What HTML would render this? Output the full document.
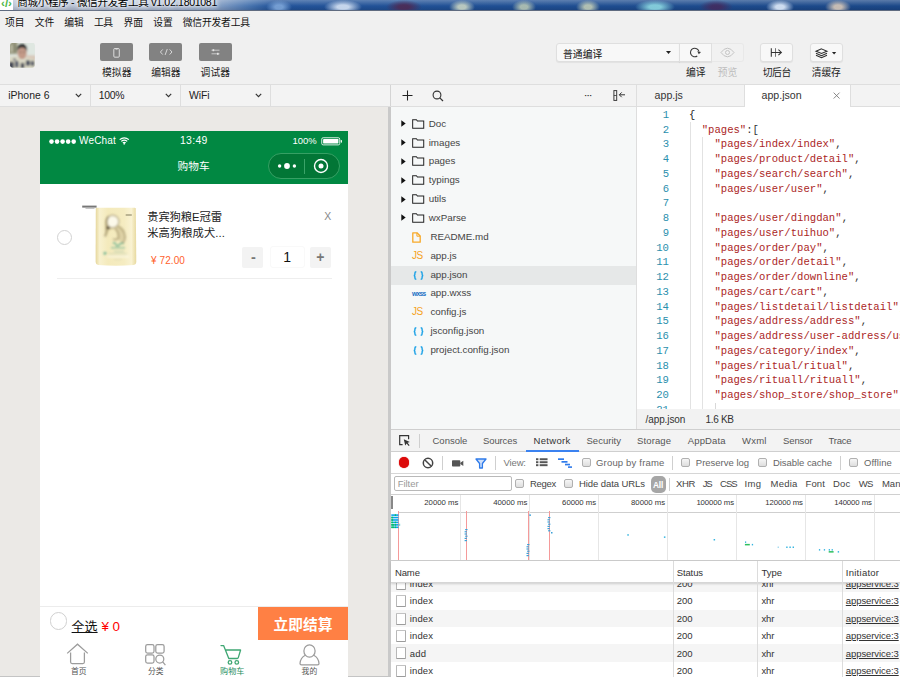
<!DOCTYPE html>
<html lang="zh"><head><meta charset="utf-8"><title>商城小程序 - 微信开发者工具</title>
<style>
html,body{margin:0;padding:0}
body{width:900px;height:677px;overflow:hidden;position:relative;background:#f0f0f0;font-family:"Liberation Sans","Noto Sans CJK SC",sans-serif;}
.a{position:absolute;display:block}
.t{position:absolute;white-space:pre}
svg{overflow:visible}
</style></head><body>
<div class="a" style="left:0px;top:0px;width:900px;height:11px;background:radial-gradient(ellipse 13px 7px at 279px 7px,rgba(130,170,220,.85) 30%,rgba(0,0,0,0) 100%),radial-gradient(ellipse 19px 7px at 343px 7px,rgba(205,220,240,.95) 30%,rgba(0,0,0,0) 100%),radial-gradient(ellipse 18px 7px at 404px 7px,rgba(80,40,80,.85) 30%,rgba(0,0,0,0) 100%),radial-gradient(ellipse 13px 7px at 462px 7px,rgba(200,212,196,.9) 30%,rgba(0,0,0,0) 100%),radial-gradient(ellipse 12px 7px at 524px 7px,rgba(190,204,182,.85) 30%,rgba(0,0,0,0) 100%),radial-gradient(ellipse 12px 7px at 588px 7px,rgba(200,210,185,.85) 30%,rgba(0,0,0,0) 100%),radial-gradient(ellipse 20px 7px at 655px 7px,rgba(140,215,225,.9) 30%,rgba(0,0,0,0) 100%),radial-gradient(ellipse 17px 7px at 716px 7px,rgba(70,40,90,.8) 30%,rgba(0,0,0,0) 100%),radial-gradient(ellipse 14px 7px at 780px 7px,rgba(215,228,245,.95) 30%,rgba(0,0,0,0) 100%),radial-gradient(ellipse 13px 7px at 838px 7px,rgba(215,200,185,.9) 30%,rgba(0,0,0,0) 100%),linear-gradient(180deg,rgba(255,255,255,.28) 0,rgba(255,255,255,0) 55%,rgba(0,0,20,.16) 100%),linear-gradient(90deg,#b9c3d4 0,#b3bed1 60px,#a9b7ce 150px,#8fa6c8 212px,#4a76b0 248px,#23549a 272px,#1f4f93 500px,#1b4888 900px);"></div>
<div class="a" style="left:0px;top:10px;width:900px;height:1px;background:#5f6b80;"></div>
<div class="a" style="left:0px;top:0px;width:13px;height:9.5px;background:#fff;"></div>
<div class="t" style="left:1px;top:-5px;font-size:11.65px;line-height:16px;color:#4db848;font-weight:700;">‹/›</div>
<div class="t" style="left:17.3px;top:-7.4px;font-size:10.56px;line-height:18px;color:#000;letter-spacing:-0.31px;text-shadow:0 0 3px #fff,0 0 5px #fff,0 0 6px #fff;">商城小程序 - 微信开发者工具 v1.02.1801081</div>
<div class="t" style="left:4.9px;top:15.3px;font-size:9.8px;line-height:16px;color:#111;letter-spacing:0.05px;">项目</div>
<div class="t" style="left:34.7px;top:15.3px;font-size:9.8px;line-height:16px;color:#111;">文件</div>
<div class="t" style="left:64.2px;top:15.3px;font-size:9.8px;line-height:16px;color:#111;">编辑</div>
<div class="t" style="left:93.9px;top:15.3px;font-size:9.8px;line-height:16px;color:#111;letter-spacing:-0.4px;">工具</div>
<div class="t" style="left:123.4px;top:15.3px;font-size:9.8px;line-height:16px;color:#111;">界面</div>
<div class="t" style="left:153.2px;top:15.3px;font-size:9.8px;line-height:16px;color:#111;">设置</div>
<div class="t" style="left:182.7px;top:15.3px;font-size:9.8px;line-height:16px;color:#111;letter-spacing:-0.19px;">微信开发者工具</div>
<svg class="a" style="left:10px;top:43.200px" width="24.800" height="24.800" viewBox="0 0 25 25"><defs><clipPath id="av"><rect width="25" height="25" rx="2.500"/></clipPath><filter id="bl" x="-20%" y="-20%" width="140%" height="140%"><feGaussianBlur stdDeviation="0.850"/></filter></defs>
<g clip-path="url(#av)"><rect width="25" height="25" fill="#dde3dc"/><g filter="url(#bl)"><rect x="-2" y="-2" width="9.500" height="13" fill="#99997f"/><rect x="0.500" y="2" width="2" height="7" fill="#bdbda8"/><rect x="4" y="1" width="1.600" height="8" fill="#7d7d68"/><rect x="16" y="-2" width="11" height="15" fill="#dfe7e1"/>
<rect x="16.500" y="12.500" width="10" height="4.500" fill="#d8c6b8"/>
<path d="M-1 27V15Q4 12 8 14L12.500 18 16 15Q21 14.500 26 17.500V27Z" fill="#dcd9c5"/>
<ellipse cx="12.300" cy="10" rx="4.600" ry="6.400" fill="#c39a88"/><path d="M7 8.500Q6.500 1 12.500 1Q18 1.200 17.300 8.500Q15.500 4.300 11.500 4.600Q8.500 5 7 8.500Z" fill="#272a2b"/>
<ellipse cx="10.500" cy="9" rx="1" ry="0.500" fill="#5a4540"/><ellipse cx="14.200" cy="9" rx="1" ry="0.500" fill="#5a4540"/>
<rect x="-1" y="19" width="5" height="7" rx="1.500" fill="#474b58"/><rect x="5" y="18" width="3.500" height="7" rx="1.500" fill="#50566a"/><rect x="10.800" y="20" width="3.600" height="6" rx="1.500" fill="#434754"/><rect x="16" y="17.200" width="4.200" height="6" rx="1.800" fill="#4c5162"/><rect x="21" y="18" width="3.500" height="5.500" rx="1.500" fill="#555a68"/><rect x="3" y="15.500" width="3" height="2.500" rx="1" fill="#7d8088"/></g></g></svg>
<div class="a" style="left:100px;top:43.3px;width:33px;height:18.1px;background:#828282;border-radius:2px;"><svg class="a" style="left:13px;top:4.600px" width="7.100" height="9.700" viewBox="0 0 8 11"><rect x="0.9" y="0.6" width="6.2" height="9.8" rx="1" fill="none" stroke="#f0f0f0" stroke-width="0.950"/><rect x="2.8" y="1.700" width="2.400" height="0.600" fill="#eee"/></svg></div>
<div class="a" style="left:149.2px;top:43.3px;width:32.8px;height:18.1px;background:#828282;border-radius:2px;"><svg class="a" style="left:9.700px;top:5px" width="14.400" height="8" viewBox="0 0 15 9"><path d="M3.6 1.6L1 4.5l2.6 2.9M11.4 1.6L14 4.5l-2.6 2.9M8.7 1.2L6.3 7.8" fill="none" stroke="#ececec" stroke-width="0.900"/></svg></div>
<div class="a" style="left:199px;top:43.3px;width:32.7px;height:18.1px;background:#828282;border-radius:2px;"><svg class="a" style="left:11px;top:4px" width="11" height="10" viewBox="0 0 11 10"><path d="M1.500 3.200h8M1.500 6.800h8" stroke="#dcdcdc" stroke-width="0.800"/><rect x="2.600" y="2.200" width="1.600" height="2" fill="#e4e4e4"/><rect x="7" y="5.800" width="1.600" height="2" fill="#e4e4e4"/></svg></div>
<div class="t" style="left:102px;top:64.7px;font-size:9.8px;line-height:16px;color:#222;letter-spacing:0.07px;">模拟器</div>
<div class="t" style="left:151.3px;top:64.7px;font-size:9.8px;line-height:16px;color:#222;letter-spacing:-0.03px;">编辑器</div>
<div class="t" style="left:200.6px;top:64.7px;font-size:9.8px;line-height:16px;color:#222;letter-spacing:0.07px;">调试器</div>
<div class="a" style="left:555.6px;top:43px;width:124.2px;height:19px;background:#f8f8f8;box-sizing:border-box;border:1px solid #dfdfdf;border-radius:3px 0 0 3px;box-shadow:0 1px 1px rgba(0,0,0,.06);"></div>
<div class="t" style="left:563px;top:47px;font-size:9.8px;line-height:16px;color:#111;letter-spacing:0.05px;">普通编译</div>
<svg class="a" style="left:665.700px;top:51.400px" width="5" height="3" viewBox="0 0 5 3"><path d="M0 0h5L2.5 3z" fill="#222"/></svg>
<div class="a" style="left:678.8px;top:43px;width:33.2px;height:19px;background:#f8f8f8;box-sizing:border-box;border:1px solid #dfdfdf;box-shadow:0 1px 1px rgba(0,0,0,.06);"></div>
<svg class="a" style="left:689px;top:47px" width="13" height="12" viewBox="0 0 13 12"><path d="M8.270 9.020A4.300 4.300 0 1 1 9.950 4.390" fill="none" stroke="#3a3a3a" stroke-width="1.050"/><path d="M8.200 4.200L12 5.100 9.800 7.300z" fill="#3a3a3a"/></svg>
<div class="a" style="left:711.5px;top:43px;width:32px;height:19px;background:#f1f1f1;box-sizing:border-box;border:1px solid #e8e8e8;border-left:none;border-radius:0 3px 3px 0;"></div>
<svg class="a" style="left:720px;top:47px" width="15" height="11" viewBox="0 0 15 11"><path d="M1 5.5Q4 1.2 7.5 1.2T14 5.5Q11 9.8 7.5 9.8T1 5.5z" fill="none" stroke="#c4c4c4" stroke-width="1"/><circle cx="7.5" cy="5.5" r="2" fill="none" stroke="#c4c4c4" stroke-width="1"/></svg>
<div class="a" style="left:760.4px;top:43px;width:32.6px;height:19px;background:#f8f8f8;box-sizing:border-box;border:1px solid #dfdfdf;border-radius:3px;box-shadow:0 1px 1px rgba(0,0,0,.06);"></div>
<svg class="a" style="left:770px;top:47px" width="13" height="11" viewBox="0 0 13 11"><path d="M1.300 1.200v8.600M1.300 5.400h10M8.400 2.700l3 2.700-3 2.700" fill="none" stroke="#333" stroke-width="1.050"/><path d="M5.500 1.200v8.600" fill="none" stroke="#333" stroke-opacity=".75" stroke-width="0.900"/></svg>
<div class="a" style="left:810px;top:43px;width:32.5px;height:19px;background:#f8f8f8;box-sizing:border-box;border:1px solid #dfdfdf;border-radius:3px;box-shadow:0 1px 1px rgba(0,0,0,.06);"></div>
<svg class="a" style="left:815.300px;top:47.600px" width="13" height="10.600" viewBox="0 0 13 12" preserveAspectRatio="none"><path d="M6.500 1L12 3.600 6.500 6.200 1 3.600z" fill="none" stroke="#2e2e2e" stroke-width="1.150"/><path d="M1 6L6.500 8.600 12 6M1 8.300L6.500 10.900 12 8.300" fill="none" stroke="#2e2e2e" stroke-width="1.150"/></svg>
<svg class="a" style="left:832.400px;top:51.600px" width="4.200" height="2.600" viewBox="0 0 5 3"><path d="M0 0h5L2.5 3z" fill="#222"/></svg>
<div class="t" style="left:686px;top:64.6px;font-size:9.8px;line-height:16px;color:#222;">编译</div>
<div class="t" style="left:717.8px;top:64.6px;font-size:9.8px;line-height:16px;color:#bdbdbd;letter-spacing:-0.2px;">预览</div>
<div class="t" style="left:762.7px;top:64.6px;font-size:9.8px;line-height:16px;color:#222;letter-spacing:-0.37px;">切后台</div>
<div class="t" style="left:811.8px;top:64.6px;font-size:9.8px;line-height:16px;color:#222;letter-spacing:-0.17px;">清缓存</div>
<div class="a" style="left:0px;top:85px;width:900px;height:21px;background:#f3f3f3;"></div>
<div class="a" style="left:0px;top:84px;width:900px;height:1px;background:#dedede;"></div>
<div class="a" style="left:0px;top:106px;width:900px;height:1px;background:#dedede;"></div>
<div class="t" style="left:8.3px;top:88px;font-size:10.43px;line-height:16px;color:#222;">iPhone 6</div>
<svg class="a" style="left:74.5px;top:93px" width="7" height="5" viewBox="0 0 7 5"><path d="M0.8 0.9L3.5 3.6 6.2 0.9" fill="none" stroke="#333" stroke-width="1.2"/></svg>
<div class="a" style="left:89.5px;top:85px;width:1px;height:21px;background:#dedede;"></div>
<div class="t" style="left:98.8px;top:88px;font-size:10.43px;line-height:16px;color:#222;letter-spacing:-0.32px;">100%</div>
<svg class="a" style="left:165px;top:93px" width="7" height="5" viewBox="0 0 7 5"><path d="M0.8 0.9L3.5 3.6 6.2 0.9" fill="none" stroke="#333" stroke-width="1.2"/></svg>
<div class="a" style="left:180px;top:85px;width:1px;height:21px;background:#dedede;"></div>
<div class="t" style="left:189px;top:88px;font-size:10.43px;line-height:16px;color:#222;letter-spacing:-0.12px;">WiFi</div>
<svg class="a" style="left:255px;top:93px" width="7" height="5" viewBox="0 0 7 5"><path d="M0.8 0.9L3.5 3.6 6.2 0.9" fill="none" stroke="#333" stroke-width="1.2"/></svg>
<div class="a" style="left:270px;top:85px;width:1px;height:21px;background:#dedede;"></div>
<div class="a" style="left:390px;top:85px;width:1px;height:21px;background:#d4d4d4;"></div>
<svg class="a" style="left:402px;top:90px" width="11" height="11" viewBox="0 0 11 11"><path d="M5.5 0.500v10M0.5 5.500h10" stroke="#222" stroke-width="1.05"/></svg>
<svg class="a" style="left:432px;top:90px" width="12" height="12" viewBox="0 0 12 12"><circle cx="5" cy="5" r="3.9" fill="none" stroke="#333" stroke-width="1.1"/><path d="M7.800 7.800L11 11" stroke="#333" stroke-width="1.2"/></svg>
<div class="t" style="left:584.4px;top:88.5px;font-size:7.92px;line-height:14px;color:#222;font-weight:700;letter-spacing:-0.11px;">···</div>
<svg class="a" style="left:612.5px;top:90px" width="13" height="11" viewBox="0 0 13 11"><rect x="0.9" y="0.600" width="2.800" height="9.800" fill="none" stroke="#333" stroke-width="0.95"/><path d="M0.900 5.500h2.800" stroke="#333" stroke-width="0.8"/><path d="M12 4.800H6.500M8.700 2.400L6.300 4.800 8.700 7.200" fill="none" stroke="#333" stroke-width="1"/></svg>
<div class="a" style="left:636px;top:85px;width:1px;height:345px;background:#dedede;"></div>
<div class="t" style="left:654.6px;top:87.3px;font-size:10.61px;line-height:16px;color:#333;">app.js</div>
<div class="a" style="left:744px;top:85px;width:106.5px;height:22px;background:#fff;box-sizing:border-box;border-left:1px solid #dedede;border-right:1px solid #dedede;"></div>
<div class="t" style="left:761.5px;top:87.3px;font-size:10.61px;line-height:16px;color:#333;">app.json</div>
<svg class="a" style="left:832.800px;top:92px" width="7.200" height="7.200" viewBox="0 0 8 8"><path d="M0.700 0.700l6.600 6.600M7.300 0.700L0.700 7.300" stroke="#777" stroke-width="0.95"/></svg>
<div class="a" style="left:0px;top:107px;width:388.5px;height:570px;background:#ebe9e6;"></div>
<div class="a" style="left:388.3px;top:107px;width:2.7px;height:570px;background:#c9c9c9;"></div>
<div class="a" style="left:0px;top:676px;width:391px;height:1px;background:#c4c4c4;"></div>
<div class="a" style="left:40px;top:131px;width:308px;height:546px;background:#fff;"></div>
<div class="a" style="left:40px;top:131px;width:308px;height:52.6px;background:#018842;"></div>
<svg class="a" style="left:48.600px;top:138.500px" width="28" height="6" viewBox="0 0 28 6"><circle cx="2.5" cy="2.6" r="2.3" fill="#fff"/><circle cx="8.05" cy="2.6" r="2.3" fill="#fff"/><circle cx="13.6" cy="2.6" r="2.3" fill="#fff"/><circle cx="19.15" cy="2.6" r="2.3" fill="#fff"/><circle cx="24.7" cy="2.6" r="2.3" fill="#fff"/></svg>
<div class="t" style="left:79px;top:133px;font-size:10px;line-height:16px;color:#fff;letter-spacing:0.18px;">WeChat</div>
<svg class="a" style="left:119px;top:137px" width="10.500" height="7.600" viewBox="0 0 11 9" preserveAspectRatio="none"><path d="M0.700 3.200Q5.500 -1.200 10.300 3.200M2.400 5.200Q5.500 2.400 8.600 5.200M4 7Q5.500 5.700 7 7" fill="none" stroke="#fff" stroke-width="1.350"/><circle cx="5.500" cy="8" r="1" fill="#fff"/></svg>
<div class="t" style="left:180px;top:132.7px;font-size:10.43px;line-height:16px;color:#fff;letter-spacing:0.3px;">13:49</div>
<div class="t" style="left:292.4px;top:134.3px;font-size:9.46px;line-height:14px;color:#fff;">100%</div>
<svg class="a" style="left:320.600px;top:137.200px" width="22" height="9.400" viewBox="0 0 23 10" preserveAspectRatio="none"><rect x="0.800" y="0.800" width="18.800" height="7.600" rx="1.500" fill="none" stroke="#fff" stroke-width="0.9"/><rect x="2.200" y="2.200" width="16" height="4.800" rx="0.500" fill="#fff"/><rect x="20.600" y="3.200" width="1.300" height="2.800" rx="0.600" fill="#fff"/></svg>
<div class="t" style="left:177.6px;top:158px;font-size:10.67px;line-height:16px;color:#fff;">购物车</div>
<div class="a" style="left:268.4px;top:153.4px;width:71.6px;height:25.2px;background:#027636;box-sizing:border-box;border:1px solid #36a064;border-radius:13px;"></div>
<div class="a" style="left:304.2px;top:158.5px;width:0.8px;height:15px;background:#3aa368;"></div>
<svg class="a" style="left:276px;top:161px" width="22" height="10" viewBox="0 0 22 10"><circle cx="3.600" cy="5" r="1.700" fill="#fff"/><circle cx="11" cy="5" r="2.900" fill="#fff"/><circle cx="18.400" cy="5" r="1.700" fill="#fff"/></svg>
<svg class="a" style="left:313.400px;top:158px" width="16" height="16" viewBox="0 0 16 16"><circle cx="8" cy="8" r="6.500" fill="none" stroke="#fff" stroke-width="1.400"/><circle cx="8" cy="8" r="2.500" fill="#fff"/></svg>
<div class="a" style="left:57.2px;top:230px;width:15px;height:15px;background:#fff;box-sizing:border-box;border:1px solid #d2d2d2;border-radius:50%;"></div>
<svg class="a" style="left:81px;top:205px" width="62" height="61" viewBox="0 0 62 61"><defs><linearGradient id="bag" x1="0" x2="1"><stop offset="0" stop-color="#e6d79c"/><stop offset="0.100" stop-color="#f8f1cf"/><stop offset="0.300" stop-color="#f4eabc"/><stop offset="0.700" stop-color="#f5ecc1"/><stop offset="0.880" stop-color="#f9f2d2"/><stop offset="1" stop-color="#e7d99f"/></linearGradient><filter id="b2" x="-20%" y="-20%" width="140%" height="140%"><feGaussianBlur stdDeviation="0.800"/></filter></defs>
<path d="M14.800 3.400Q15 2.800 16 2.800H53.600Q54.600 2.800 54.800 3.400L55.300 57Q55.300 59.600 52.800 60Q35 61.300 17.200 60Q14.600 59.600 14.600 57Z" fill="url(#bag)"/>
<g filter="url(#b2)"><circle cx="31.500" cy="16.500" r="6.300" fill="#fcf9ea" stroke="#8f7f56" stroke-opacity=".55" stroke-width="1.500"/>
<path d="M27.500 11.500Q24.500 16 25.800 22Q26.500 27 24 31.500" fill="none" stroke="#7a6a44" stroke-opacity=".6" stroke-width="2"/>
<path d="M36.500 21Q43 24 44 31Q44.500 35 41.500 38.500M34 23.500Q38 27 37.500 33Q35 35.500 32 34" fill="none" stroke="#8a7a52" stroke-opacity=".5" stroke-width="1.800"/>
<path d="M26 12Q22.500 20 24.500 31L28.500 25Q31 24 34 23.500Q37 28 36.500 34L41 38Q45.500 33 43.500 26Q41 21 36.500 20.500Q33 24 28 22Z" fill="#b9a878" fill-opacity=".38"/><ellipse cx="27.300" cy="22.800" rx="1.700" ry="1.400" fill="#2b2418" fill-opacity=".9"/>
<path d="M32 38.500Q34 36.500 35 39.500T38.500 39.500T42.500 39" fill="none" stroke="#3f9d80" stroke-opacity=".8" stroke-width="1.200"/>
<rect x="30" y="42.200" width="14" height="1.200" fill="#3f9d80" fill-opacity=".6"/><rect x="33" y="46" width="10" height="0.900" fill="#8fb6a0" fill-opacity=".6"/><rect x="28" y="48.500" width="18" height="0.900" fill="#9fbea8" fill-opacity=".5"/>
<circle cx="24" cy="48.300" r="1.400" fill="#3f9d80" fill-opacity=".8"/><rect x="26" y="50.800" width="22" height="1.600" fill="#ffffff" fill-opacity=".55"/><rect x="33" y="54" width="8" height="0.800" fill="#d9d3ac" fill-opacity=".8"/></g>
<rect x="1.200" y="0.600" width="14.400" height="2" fill="#4a4a4a" fill-opacity=".75"/><rect x="4.500" y="3.300" width="9" height="0.700" fill="#9a9a9a" fill-opacity=".8"/><rect x="44.500" y="9.200" width="6.500" height="1.500" rx="0.700" fill="#8d8768" fill-opacity=".75"/></svg>
<div class="t" style="left:147.2px;top:208.2px;font-size:11.3px;line-height:18px;color:#222;letter-spacing:-0.08px;">贵宾狗粮E冠雷</div>
<div class="t" style="left:147.2px;top:223.8px;font-size:11.3px;line-height:18px;color:#222;letter-spacing:0.06px;">米高狗粮成犬...</div>
<div class="t" style="left:151px;top:253px;font-size:10px;line-height:16px;color:#ff5f2e;letter-spacing:0.09px;">¥ 72.00</div>
<div class="t" style="left:324.2px;top:209px;font-size:10.43px;line-height:16px;color:#888;letter-spacing:0.53px;">X</div>
<div class="a" style="left:242px;top:246.5px;width:21.4px;height:21.2px;background:#f3f3f3;border-radius:2px;"></div>
<div class="t" style="left:251px;top:247px;font-size:14.56px;line-height:20px;color:#777;font-weight:700;letter-spacing:0.13px;">-</div>
<div class="a" style="left:269.5px;top:246px;width:35.2px;height:22px;background:#fff;box-sizing:border-box;border:1px solid #f9f9f9;border-radius:3px;"></div>
<div class="t" style="left:283.3px;top:244.8px;font-size:14.08px;line-height:24px;color:#111;letter-spacing:-0.64px;">1</div>
<div class="a" style="left:309.6px;top:246.5px;width:21.4px;height:21.2px;background:#f3f3f3;border-radius:2px;"></div>
<div class="t" style="left:316.2px;top:248.4px;font-size:14px;line-height:18px;color:#777;font-weight:700;letter-spacing:0.21px;">+</div>
<div class="a" style="left:57px;top:278px;width:274.7px;height:1px;background:#eeeeee;"></div>
<div class="a" style="left:40px;top:605.5px;width:308px;height:1px;background:#ececec;"></div>
<div class="a" style="left:49.5px;top:612.3px;width:17.5px;height:17.5px;background:#fff;box-sizing:border-box;border:1px solid #d0d0d0;border-radius:50%;"></div>
<div class="t" style="left:71.6px;top:617.4px;font-size:12.99px;line-height:20px;color:#111;text-decoration:underline;text-underline-offset:1px;">全选</div>
<div class="t" style="left:101.4px;top:617.4px;font-size:13.38px;line-height:20px;color:#f00;">¥ 0</div>
<div class="a" style="left:258px;top:607px;width:90px;height:32.6px;background:#ff8044;"></div>
<div class="t" style="left:273.6px;top:614px;font-size:14.71px;line-height:22px;color:#fff;font-weight:700;">立即结算</div>
<svg class="a" style="left:66px;top:643px" width="23" height="22" viewBox="0 0 23 22"><path d="M1.200 10.400L11.500 1.200 21.800 10.400" fill="none" stroke="#9c9c9c" stroke-width="1.250"/><path d="M4.600 9.500V19Q4.600 20.500 6.100 20.500H16.900Q18.400 20.500 18.400 19V9.500" fill="none" stroke="#9c9c9c" stroke-width="1.250"/></svg>
<div class="t" style="left:71px;top:666px;font-size:7.8px;line-height:12px;color:#555;">首页</div>
<svg class="a" style="left:144.500px;top:644.300px" width="21" height="22" viewBox="0 0 21 22"><g fill="none" stroke="#9c9c9c" stroke-width="1.250"><rect x="0.700" y="0.700" width="8.300" height="8.300" rx="1.800"/><rect x="10.800" y="0.700" width="8.300" height="8.300" rx="1.800"/><rect x="0.700" y="10.800" width="8.300" height="8.300" rx="1.800"/><circle cx="14.800" cy="15" r="4"/><path d="M17.700 17.900L20.400 21.200"/></g></svg>
<div class="t" style="left:148px;top:666px;font-size:7.8px;line-height:12px;color:#555;">分类</div>
<svg class="a" style="left:220px;top:644px" width="22" height="21" viewBox="0 0 22 21"><g fill="none" stroke="#3fa773" stroke-width="1.300" stroke-linejoin="round" stroke-linecap="round"><path d="M1 1.600H3.600L8.800 14.500H17.300Q18 14.500 18.300 13.600L20.600 6H5.400"/><circle cx="10" cy="18.400" r="1.800"/><circle cx="16.800" cy="18.400" r="1.800"/></g></svg>
<div class="t" style="left:220px;top:666px;font-size:8.13px;line-height:12px;color:#1f8f5f;">购物车</div>
<svg class="a" style="left:299px;top:643.500px" width="21" height="22" viewBox="0 0 21 22"><g fill="none" stroke="#9c9c9c" stroke-width="1.250"><ellipse cx="10.500" cy="7" rx="5.600" ry="6.200"/><path d="M6.300 11.200Q1.500 13.500 1 19.500Q1 20.800 2.500 20.800H18.500Q20 20.800 20 19.500Q19.500 13.500 14.700 11.200"/></g></svg>
<div class="t" style="left:301.6px;top:666px;font-size:7.8px;line-height:12px;color:#555;letter-spacing:0.1px;">我的</div>
<div class="a" style="left:391px;top:107px;width:245px;height:322.5px;background:#f6f8f8;"></div>
<svg class="a" style="left:401px;top:120.2px" width="5" height="7" viewBox="0 0 5 7"><path d="M0.300 0.300L4.700 3.500 0.300 6.700z" fill="#111"/></svg>
<svg class="a" style="left:411.500px;top:118.7px" width="12.400" height="10" viewBox="0 0 13 10" preserveAspectRatio="none"><path d="M0.700 9.300V0.700H4.600L5.700 2H12.300V9.300z" fill="none" stroke="#222" stroke-width="1.050"/></svg>
<div class="t" style="left:428.7px;top:116.7px;font-size:9.8px;line-height:14px;color:#444;">Doc</div>
<svg class="a" style="left:401px;top:139.05px" width="5" height="7" viewBox="0 0 5 7"><path d="M0.300 0.300L4.700 3.500 0.300 6.700z" fill="#111"/></svg>
<svg class="a" style="left:411.500px;top:137.55px" width="12.400" height="10" viewBox="0 0 13 10" preserveAspectRatio="none"><path d="M0.700 9.300V0.700H4.600L5.700 2H12.300V9.300z" fill="none" stroke="#222" stroke-width="1.050"/></svg>
<div class="t" style="left:428.7px;top:135.6px;font-size:9.8px;line-height:14px;color:#444;">images</div>
<svg class="a" style="left:401px;top:157.9px" width="5" height="7" viewBox="0 0 5 7"><path d="M0.300 0.300L4.700 3.500 0.300 6.700z" fill="#111"/></svg>
<svg class="a" style="left:411.500px;top:156.4px" width="12.400" height="10" viewBox="0 0 13 10" preserveAspectRatio="none"><path d="M0.700 9.300V0.700H4.600L5.700 2H12.300V9.300z" fill="none" stroke="#222" stroke-width="1.050"/></svg>
<div class="t" style="left:428.7px;top:154.4px;font-size:9.8px;line-height:14px;color:#444;">pages</div>
<svg class="a" style="left:401px;top:176.75px" width="5" height="7" viewBox="0 0 5 7"><path d="M0.300 0.300L4.700 3.500 0.300 6.700z" fill="#111"/></svg>
<svg class="a" style="left:411.500px;top:175.25px" width="12.400" height="10" viewBox="0 0 13 10" preserveAspectRatio="none"><path d="M0.700 9.300V0.700H4.600L5.700 2H12.300V9.300z" fill="none" stroke="#222" stroke-width="1.050"/></svg>
<div class="t" style="left:428.7px;top:173.2px;font-size:9.8px;line-height:14px;color:#444;">typings</div>
<svg class="a" style="left:401px;top:195.6px" width="5" height="7" viewBox="0 0 5 7"><path d="M0.300 0.300L4.700 3.500 0.300 6.700z" fill="#111"/></svg>
<svg class="a" style="left:411.500px;top:194.1px" width="12.400" height="10" viewBox="0 0 13 10" preserveAspectRatio="none"><path d="M0.700 9.300V0.700H4.600L5.700 2H12.300V9.300z" fill="none" stroke="#222" stroke-width="1.050"/></svg>
<div class="t" style="left:428.7px;top:192.1px;font-size:9.8px;line-height:14px;color:#444;">utils</div>
<svg class="a" style="left:401px;top:214.45px" width="5" height="7" viewBox="0 0 5 7"><path d="M0.300 0.300L4.700 3.500 0.300 6.700z" fill="#111"/></svg>
<svg class="a" style="left:411.500px;top:212.95px" width="12.400" height="10" viewBox="0 0 13 10" preserveAspectRatio="none"><path d="M0.700 9.300V0.700H4.600L5.700 2H12.300V9.300z" fill="none" stroke="#222" stroke-width="1.050"/></svg>
<div class="t" style="left:428.7px;top:210.9px;font-size:9.8px;line-height:14px;color:#444;">wxParse</div>
<svg class="a" style="left:412px;top:231.6px" width="9" height="11" viewBox="0 0 9 11"><path d="M0.800 0.800H5L8.200 4V10.200H0.800z" fill="none" stroke="#f7a928" stroke-width="1.300" stroke-linejoin="round"/><path d="M4.900 0.800V4.200H8.200" fill="none" stroke="#f7a928" stroke-width="1"/></svg>
<div class="t" style="left:430.4px;top:229.8px;font-size:9.8px;line-height:14px;color:#444;">README.md</div>
<div class="t" style="left:412.1px;top:247.7px;font-size:10px;line-height:16px;color:#f5a21d;letter-spacing:-0.69px;">JS</div>
<div class="t" style="left:430.4px;top:248.7px;font-size:9.8px;line-height:14px;color:#444;">app.js</div>
<div class="a" style="left:391px;top:266.2px;width:245px;height:18.5px;background:#e6e8e8;"></div>
<svg class="a" style="left:412.500px;top:270.5px" width="11" height="9" viewBox="0 0 11 9"><path d="M3.300 0.700Q1.900 0.700 1.900 2V3.300Q1.900 4.500 0.700 4.500Q1.900 4.500 1.900 5.700V7Q1.900 8.300 3.300 8.300M7.700 0.700Q9.100 0.700 9.100 2V3.300Q9.100 4.500 10.300 4.500Q9.100 4.500 9.100 5.700V7Q9.100 8.300 7.700 8.300" fill="none" stroke="#1ba1e6" stroke-width="1.400"/></svg>
<div class="t" style="left:430.4px;top:267.5px;font-size:9.8px;line-height:14px;color:#444;">app.json</div>
<div class="t" style="left:412.1px;top:288.7px;font-size:6.6px;line-height:10px;color:#1a6fc4;font-weight:700;letter-spacing:-0.69px;">wxss</div>
<div class="t" style="left:430.4px;top:286.4px;font-size:9.8px;line-height:14px;color:#444;">app.wxss</div>
<div class="t" style="left:412.1px;top:304.2px;font-size:10px;line-height:16px;color:#f5a21d;letter-spacing:-0.69px;">JS</div>
<div class="t" style="left:430.4px;top:305.2px;font-size:9.8px;line-height:14px;color:#444;">config.js</div>
<svg class="a" style="left:412.500px;top:327.05px" width="11" height="9" viewBox="0 0 11 9"><path d="M3.300 0.700Q1.900 0.700 1.900 2V3.300Q1.900 4.500 0.700 4.500Q1.900 4.500 1.900 5.700V7Q1.900 8.300 3.300 8.300M7.700 0.700Q9.100 0.700 9.100 2V3.300Q9.100 4.500 10.300 4.500Q9.100 4.500 9.100 5.700V7Q9.100 8.300 7.700 8.300" fill="none" stroke="#1ba1e6" stroke-width="1.400"/></svg>
<div class="t" style="left:430.4px;top:324.1px;font-size:9.8px;line-height:14px;color:#444;">jsconfig.json</div>
<svg class="a" style="left:412.500px;top:345.9px" width="11" height="9" viewBox="0 0 11 9"><path d="M3.300 0.700Q1.900 0.700 1.900 2V3.300Q1.900 4.500 0.700 4.500Q1.900 4.500 1.900 5.700V7Q1.900 8.300 3.300 8.300M7.700 0.700Q9.100 0.700 9.100 2V3.300Q9.100 4.500 10.300 4.500Q9.100 4.500 9.100 5.700V7Q9.100 8.300 7.700 8.300" fill="none" stroke="#1ba1e6" stroke-width="1.400"/></svg>
<div class="t" style="left:430.4px;top:342.9px;font-size:9.8px;line-height:14px;color:#444;">project.config.json</div>
<div class="a" style="left:637px;top:107px;width:263px;height:302px;background:#fff;"></div>
<div class="t" style="left:662.64px;top:106.7px;font-size:10.6px;line-height:16px;color:#2b8fad;font-family:'Liberation Mono','Noto Sans CJK SC',monospace;">1</div>
<div class="t" style="left:689px;top:106.7px;font-size:10.6px;line-height:16px;color:#222;font-family:'Liberation Mono','Noto Sans CJK SC',monospace;">{</div>
<div class="t" style="left:662.64px;top:121.5px;font-size:10.6px;line-height:16px;color:#2b8fad;font-family:'Liberation Mono','Noto Sans CJK SC',monospace;">2</div>
<div class="t" style="left:701.72px;top:121.5px;font-size:10.6px;line-height:16px;color:#ab2626;font-family:'Liberation Mono','Noto Sans CJK SC',monospace;">"pages"</div>
<div class="t" style="left:746.24px;top:121.5px;font-size:10.6px;line-height:16px;color:#333;font-family:'Liberation Mono','Noto Sans CJK SC',monospace;">:[</div>
<div class="t" style="left:662.64px;top:136.2px;font-size:10.6px;line-height:16px;color:#2b8fad;font-family:'Liberation Mono','Noto Sans CJK SC',monospace;">3</div>
<div class="t" style="left:714.44px;top:136.2px;font-size:10.6px;line-height:16px;color:#ab2626;font-family:'Liberation Mono','Noto Sans CJK SC',monospace;">"pages/index/index"</div>
<div class="t" style="left:835.28px;top:136.2px;font-size:10.6px;line-height:16px;color:#333;font-family:'Liberation Mono','Noto Sans CJK SC',monospace;">,</div>
<div class="t" style="left:662.64px;top:151px;font-size:10.6px;line-height:16px;color:#2b8fad;font-family:'Liberation Mono','Noto Sans CJK SC',monospace;">4</div>
<div class="t" style="left:714.44px;top:151px;font-size:10.6px;line-height:16px;color:#ab2626;font-family:'Liberation Mono','Noto Sans CJK SC',monospace;">"pages/product/detail"</div>
<div class="t" style="left:854.36px;top:151px;font-size:10.6px;line-height:16px;color:#333;font-family:'Liberation Mono','Noto Sans CJK SC',monospace;">,</div>
<div class="t" style="left:662.64px;top:165.7px;font-size:10.6px;line-height:16px;color:#2b8fad;font-family:'Liberation Mono','Noto Sans CJK SC',monospace;">5</div>
<div class="t" style="left:714.44px;top:165.7px;font-size:10.6px;line-height:16px;color:#ab2626;font-family:'Liberation Mono','Noto Sans CJK SC',monospace;">"pages/search/search"</div>
<div class="t" style="left:848px;top:165.7px;font-size:10.6px;line-height:16px;color:#333;font-family:'Liberation Mono','Noto Sans CJK SC',monospace;">,</div>
<div class="t" style="left:662.64px;top:180.5px;font-size:10.6px;line-height:16px;color:#2b8fad;font-family:'Liberation Mono','Noto Sans CJK SC',monospace;">6</div>
<div class="t" style="left:714.44px;top:180.5px;font-size:10.6px;line-height:16px;color:#ab2626;font-family:'Liberation Mono','Noto Sans CJK SC',monospace;">"pages/user/user"</div>
<div class="t" style="left:822.56px;top:180.5px;font-size:10.6px;line-height:16px;color:#333;font-family:'Liberation Mono','Noto Sans CJK SC',monospace;">,</div>
<div class="t" style="left:662.64px;top:195.3px;font-size:10.6px;line-height:16px;color:#2b8fad;font-family:'Liberation Mono','Noto Sans CJK SC',monospace;">7</div>
<div class="t" style="left:662.64px;top:210px;font-size:10.6px;line-height:16px;color:#2b8fad;font-family:'Liberation Mono','Noto Sans CJK SC',monospace;">8</div>
<div class="t" style="left:714.44px;top:210px;font-size:10.6px;line-height:16px;color:#ab2626;font-family:'Liberation Mono','Noto Sans CJK SC',monospace;">"pages/user/dingdan"</div>
<div class="t" style="left:841.64px;top:210px;font-size:10.6px;line-height:16px;color:#333;font-family:'Liberation Mono','Noto Sans CJK SC',monospace;">,</div>
<div class="t" style="left:662.64px;top:224.8px;font-size:10.6px;line-height:16px;color:#2b8fad;font-family:'Liberation Mono','Noto Sans CJK SC',monospace;">9</div>
<div class="t" style="left:714.44px;top:224.8px;font-size:10.6px;line-height:16px;color:#ab2626;font-family:'Liberation Mono','Noto Sans CJK SC',monospace;">"pages/user/tuihuo"</div>
<div class="t" style="left:835.28px;top:224.8px;font-size:10.6px;line-height:16px;color:#333;font-family:'Liberation Mono','Noto Sans CJK SC',monospace;">,</div>
<div class="t" style="left:656.28px;top:239.5px;font-size:10.6px;line-height:16px;color:#2b8fad;font-family:'Liberation Mono','Noto Sans CJK SC',monospace;">10</div>
<div class="t" style="left:714.44px;top:239.5px;font-size:10.6px;line-height:16px;color:#ab2626;font-family:'Liberation Mono','Noto Sans CJK SC',monospace;">"pages/order/pay"</div>
<div class="t" style="left:822.56px;top:239.5px;font-size:10.6px;line-height:16px;color:#333;font-family:'Liberation Mono','Noto Sans CJK SC',monospace;">,</div>
<div class="t" style="left:656.28px;top:254.3px;font-size:10.6px;line-height:16px;color:#2b8fad;font-family:'Liberation Mono','Noto Sans CJK SC',monospace;">11</div>
<div class="t" style="left:714.44px;top:254.3px;font-size:10.6px;line-height:16px;color:#ab2626;font-family:'Liberation Mono','Noto Sans CJK SC',monospace;">"pages/order/detail"</div>
<div class="t" style="left:841.64px;top:254.3px;font-size:10.6px;line-height:16px;color:#333;font-family:'Liberation Mono','Noto Sans CJK SC',monospace;">,</div>
<div class="t" style="left:656.28px;top:269.1px;font-size:10.6px;line-height:16px;color:#2b8fad;font-family:'Liberation Mono','Noto Sans CJK SC',monospace;">12</div>
<div class="t" style="left:714.44px;top:269.1px;font-size:10.6px;line-height:16px;color:#ab2626;font-family:'Liberation Mono','Noto Sans CJK SC',monospace;">"pages/order/downline"</div>
<div class="t" style="left:854.36px;top:269.1px;font-size:10.6px;line-height:16px;color:#333;font-family:'Liberation Mono','Noto Sans CJK SC',monospace;">,</div>
<div class="t" style="left:656.28px;top:283.8px;font-size:10.6px;line-height:16px;color:#2b8fad;font-family:'Liberation Mono','Noto Sans CJK SC',monospace;">13</div>
<div class="t" style="left:714.44px;top:283.8px;font-size:10.6px;line-height:16px;color:#ab2626;font-family:'Liberation Mono','Noto Sans CJK SC',monospace;">"pages/cart/cart"</div>
<div class="t" style="left:822.56px;top:283.8px;font-size:10.6px;line-height:16px;color:#333;font-family:'Liberation Mono','Noto Sans CJK SC',monospace;">,</div>
<div class="t" style="left:656.28px;top:298.6px;font-size:10.6px;line-height:16px;color:#2b8fad;font-family:'Liberation Mono','Noto Sans CJK SC',monospace;">14</div>
<div class="t" style="left:714.44px;top:298.6px;font-size:10.6px;line-height:16px;color:#ab2626;font-family:'Liberation Mono','Noto Sans CJK SC',monospace;">"pages/listdetail/listdetail"</div>
<div class="t" style="left:898.88px;top:298.6px;font-size:10.6px;line-height:16px;color:#333;font-family:'Liberation Mono','Noto Sans CJK SC',monospace;">,</div>
<div class="t" style="left:656.28px;top:313.3px;font-size:10.6px;line-height:16px;color:#2b8fad;font-family:'Liberation Mono','Noto Sans CJK SC',monospace;">15</div>
<div class="t" style="left:714.44px;top:313.3px;font-size:10.6px;line-height:16px;color:#ab2626;font-family:'Liberation Mono','Noto Sans CJK SC',monospace;">"pages/address/address"</div>
<div class="t" style="left:860.72px;top:313.3px;font-size:10.6px;line-height:16px;color:#333;font-family:'Liberation Mono','Noto Sans CJK SC',monospace;">,</div>
<div class="t" style="left:656.28px;top:328.1px;font-size:10.6px;line-height:16px;color:#2b8fad;font-family:'Liberation Mono','Noto Sans CJK SC',monospace;">16</div>
<div class="t" style="left:714.44px;top:328.1px;font-size:10.6px;line-height:16px;color:#ab2626;font-family:'Liberation Mono','Noto Sans CJK SC',monospace;">"pages/address/user-address/user-address"</div>
<div class="t" style="left:975.2px;top:328.1px;font-size:10.6px;line-height:16px;color:#333;font-family:'Liberation Mono','Noto Sans CJK SC',monospace;">,</div>
<div class="t" style="left:656.28px;top:342.9px;font-size:10.6px;line-height:16px;color:#2b8fad;font-family:'Liberation Mono','Noto Sans CJK SC',monospace;">17</div>
<div class="t" style="left:714.44px;top:342.9px;font-size:10.6px;line-height:16px;color:#ab2626;font-family:'Liberation Mono','Noto Sans CJK SC',monospace;">"pages/category/index"</div>
<div class="t" style="left:854.36px;top:342.9px;font-size:10.6px;line-height:16px;color:#333;font-family:'Liberation Mono','Noto Sans CJK SC',monospace;">,</div>
<div class="t" style="left:656.28px;top:357.6px;font-size:10.6px;line-height:16px;color:#2b8fad;font-family:'Liberation Mono','Noto Sans CJK SC',monospace;">18</div>
<div class="t" style="left:714.44px;top:357.6px;font-size:10.6px;line-height:16px;color:#ab2626;font-family:'Liberation Mono','Noto Sans CJK SC',monospace;">"pages/ritual/ritual"</div>
<div class="t" style="left:848px;top:357.6px;font-size:10.6px;line-height:16px;color:#333;font-family:'Liberation Mono','Noto Sans CJK SC',monospace;">,</div>
<div class="t" style="left:656.28px;top:372.4px;font-size:10.6px;line-height:16px;color:#2b8fad;font-family:'Liberation Mono','Noto Sans CJK SC',monospace;">19</div>
<div class="t" style="left:714.44px;top:372.4px;font-size:10.6px;line-height:16px;color:#ab2626;font-family:'Liberation Mono','Noto Sans CJK SC',monospace;">"pages/rituall/rituall"</div>
<div class="t" style="left:860.72px;top:372.4px;font-size:10.6px;line-height:16px;color:#333;font-family:'Liberation Mono','Noto Sans CJK SC',monospace;">,</div>
<div class="t" style="left:656.28px;top:387.1px;font-size:10.6px;line-height:16px;color:#2b8fad;font-family:'Liberation Mono','Noto Sans CJK SC',monospace;">20</div>
<div class="t" style="left:714.44px;top:387.1px;font-size:10.6px;line-height:16px;color:#ab2626;font-family:'Liberation Mono','Noto Sans CJK SC',monospace;">"pages/shop_store/shop_store"</div>
<div class="t" style="left:898.88px;top:387.1px;font-size:10.6px;line-height:16px;color:#333;font-family:'Liberation Mono','Noto Sans CJK SC',monospace;">,</div>
<div class="t" style="left:656.28px;top:401.9px;font-size:10.6px;line-height:16px;color:#2b8fad;font-family:'Liberation Mono','Noto Sans CJK SC',monospace;">21</div>
<div class="a" style="left:690.3px;top:122px;width:0.8px;height:287px;background:#e2e2e2;"></div>
<div class="a" style="left:702.1px;top:136.5px;width:0.8px;height:272.5px;background:#e2e2e2;"></div>
<div class="a" style="left:715px;top:402.5px;width:0.8px;height:6.5px;background:#d8d8d8;"></div>
<div class="a" style="left:637px;top:409px;width:263px;height:20.5px;background:#f2f2f2;"></div>
<div class="t" style="left:645.5px;top:411.8px;font-size:10px;line-height:16px;color:#333;letter-spacing:-0.09px;">/app.json</div>
<div class="t" style="left:705.6px;top:411.8px;font-size:10px;line-height:16px;color:#333;letter-spacing:-0.34px;">1.6 KB</div>
<div class="a" style="left:391px;top:429px;width:509px;height:248px;background:#fff;"></div>
<div class="a" style="left:391px;top:429px;width:509px;height:1px;background:#cfcfcf;"></div>
<div class="a" style="left:391px;top:430px;width:509px;height:21.5px;background:#f3f3f3;"></div>
<div class="a" style="left:391px;top:451px;width:509px;height:1px;background:#cfcfcf;"></div>
<svg class="a" style="left:398.500px;top:434.500px" width="12" height="12" viewBox="0 0 12 12"><path d="M9.600 4.200V0.700H0.700V9.600H3.600" fill="none" stroke="#333" stroke-width="1.200"/><path d="M4.800 4.300L10.800 6.900 8.500 7.800 10.600 10.200 9.700 11 7.600 8.600 6.200 10.500z" fill="#333"/></svg>
<div class="a" style="left:418.5px;top:433.5px;width:0.8px;height:14px;background:#cfcfcf;"></div>
<div class="t" style="left:432.5px;top:433.9px;font-size:9.5px;line-height:14px;color:#555;">Console</div>
<div class="t" style="left:483px;top:433.9px;font-size:9.5px;line-height:14px;color:#555;letter-spacing:-0.12px;">Sources</div>
<div class="t" style="left:533.6px;top:433.9px;font-size:9.5px;line-height:14px;color:#333;letter-spacing:0.31px;">Network</div>
<div class="t" style="left:586.5px;top:433.9px;font-size:9.5px;line-height:14px;color:#555;letter-spacing:0.02px;">Security</div>
<div class="t" style="left:637px;top:433.9px;font-size:9.5px;line-height:14px;color:#555;letter-spacing:0.13px;">Storage</div>
<div class="t" style="left:687.7px;top:433.9px;font-size:9.5px;line-height:14px;color:#555;letter-spacing:0.16px;">AppData</div>
<div class="t" style="left:742px;top:433.9px;font-size:9.5px;line-height:14px;color:#555;letter-spacing:0.21px;">Wxml</div>
<div class="t" style="left:783px;top:433.9px;font-size:9.5px;line-height:14px;color:#555;letter-spacing:-0.1px;">Sensor</div>
<div class="t" style="left:828.4px;top:433.9px;font-size:9.5px;line-height:14px;color:#555;letter-spacing:-0.17px;">Trace</div>
<div class="a" style="left:525.8px;top:450.3px;width:53.4px;height:1.5px;background:#3b82f0;"></div>
<div class="a" style="left:391px;top:473px;width:509px;height:1px;background:#d6d6d6;"></div>
<div class="a" style="left:398.6px;top:457.2px;width:10.7px;height:10.7px;background:#dc0a0a;border-radius:50%;box-shadow:0 0 1px #dc0a0a;"></div>
<svg class="a" style="left:421.500px;top:456.500px" width="12" height="12" viewBox="0 0 12 12"><circle cx="6" cy="6" r="4.700" fill="none" stroke="#444" stroke-width="1.500"/><path d="M2.700 2.700L9.300 9.300" stroke="#444" stroke-width="1.500"/></svg>
<div class="a" style="left:442.3px;top:455.5px;width:0.8px;height:14px;background:#cfcfcf;"></div>
<svg class="a" style="left:452px;top:459.500px" width="12" height="7" viewBox="0 0 12 7"><rect x="0" y="0.200" width="8.300" height="6.300" rx="0.800" fill="#555"/><path d="M8.300 2.800L11.300 0.700V6L8.300 3.900z" fill="#555"/></svg>
<svg class="a" style="left:474.600px;top:457.600px" width="12" height="11" viewBox="0 0 12 11"><path d="M1 1H11L7.400 5.500V10H4.600V5.500z" fill="#cfe0fb" stroke="#2f7bea" stroke-width="1.300" stroke-linejoin="round"/></svg>
<div class="a" style="left:495.2px;top:455.5px;width:0.8px;height:14px;background:#cfcfcf;"></div>
<div class="t" style="left:503.6px;top:455.6px;font-size:9.5px;line-height:14px;color:#777;letter-spacing:-0.17px;">View:</div>
<svg class="a" style="left:536px;top:458px" width="12" height="8.500" viewBox="0 0 13 10" preserveAspectRatio="none"><g fill="#555"><rect x="0" y="0.300" width="2.600" height="2.300"/><rect x="4" y="0.300" width="8.500" height="2.300"/><rect x="0" y="3.800" width="2.600" height="2.300"/><rect x="4" y="3.800" width="8.500" height="2.300"/><rect x="0" y="7.300" width="2.600" height="2.300"/><rect x="4" y="7.300" width="8.500" height="2.300"/></g></svg>
<svg class="a" style="left:558px;top:457.500px" width="15" height="10" viewBox="0 0 15 10"><g fill="#2f7bea"><rect x="0" y="0.300" width="6" height="1.700"/><rect x="3.500" y="3" width="6" height="1.700"/><rect x="7" y="5.700" width="5" height="1.700"/><rect x="10" y="8.300" width="4" height="1.600"/></g></svg>
<div class="a" style="left:581.7px;top:457.8px;width:9.2px;height:9.2px;background:linear-gradient(#f6f6f6,#dedede);box-sizing:border-box;border:1px solid #b0b0b0;border-radius:2px;"></div>
<div class="t" style="left:596px;top:455.6px;font-size:9.5px;line-height:14px;color:#666;letter-spacing:0.18px;">Group by frame</div>
<div class="a" style="left:672.2px;top:455.5px;width:0.8px;height:14px;background:#cfcfcf;"></div>
<div class="a" style="left:680.7px;top:457.8px;width:9.2px;height:9.2px;background:linear-gradient(#f6f6f6,#dedede);box-sizing:border-box;border:1px solid #b0b0b0;border-radius:2px;"></div>
<div class="t" style="left:695.8px;top:455.6px;font-size:9.5px;line-height:14px;color:#666;">Preserve log</div>
<div class="a" style="left:758.2px;top:457.8px;width:9.2px;height:9.2px;background:linear-gradient(#f6f6f6,#dedede);box-sizing:border-box;border:1px solid #b0b0b0;border-radius:2px;"></div>
<div class="t" style="left:773px;top:455.6px;font-size:9.5px;line-height:14px;color:#666;letter-spacing:-0.05px;">Disable cache</div>
<div class="a" style="left:840px;top:455.5px;width:0.8px;height:14px;background:#cfcfcf;"></div>
<div class="a" style="left:849.2px;top:457.8px;width:9.2px;height:9.2px;background:linear-gradient(#f6f6f6,#dedede);box-sizing:border-box;border:1px solid #b0b0b0;border-radius:2px;"></div>
<div class="t" style="left:864px;top:455.6px;font-size:9.5px;line-height:14px;color:#666;letter-spacing:0.1px;">Offline</div>
<div class="a" style="left:394.3px;top:476.3px;width:117.5px;height:15.2px;background:#fff;box-sizing:border-box;border:1px solid #b9b9b9;border-radius:2px;"></div>
<div class="t" style="left:397.8px;top:477.3px;font-size:9.5px;line-height:14px;color:#999;letter-spacing:-0.07px;">Filter</div>
<div class="a" style="left:514.9px;top:479.3px;width:9.2px;height:9.2px;background:linear-gradient(#f6f6f6,#dedede);box-sizing:border-box;border:1px solid #b0b0b0;border-radius:2px;"></div>
<div class="t" style="left:530px;top:477.3px;font-size:9.5px;line-height:14px;color:#444;letter-spacing:-0.3px;">Regex</div>
<div class="a" style="left:563.9px;top:479.3px;width:9.2px;height:9.2px;background:linear-gradient(#f6f6f6,#dedede);box-sizing:border-box;border:1px solid #b0b0b0;border-radius:2px;"></div>
<div class="t" style="left:579px;top:477.3px;font-size:9.5px;line-height:14px;color:#444;letter-spacing:-0.08px;">Hide data URLs</div>
<div class="a" style="left:650.5px;top:476px;width:15.2px;height:17.4px;background:#a6a6a6;border-radius:5px;"></div>
<div class="t" style="left:653px;top:477.6px;font-size:8.36px;line-height:14px;color:#fff;font-weight:700;letter-spacing:-0.23px;">All</div>
<div class="a" style="left:669px;top:477.5px;width:0.8px;height:13px;background:#cfcfcf;"></div>
<div class="t" style="left:676px;top:477.3px;font-size:9.5px;line-height:14px;color:#444;letter-spacing:-0.36px;">XHR</div>
<div class="t" style="left:702.7px;top:477.3px;font-size:9.5px;line-height:14px;color:#444;letter-spacing:-1.2px;">JS</div>
<div class="t" style="left:720px;top:477.3px;font-size:9.5px;line-height:14px;color:#444;letter-spacing:-0.92px;">CSS</div>
<div class="t" style="left:744.6px;top:477.3px;font-size:9.5px;line-height:14px;color:#444;letter-spacing:0.32px;">Img</div>
<div class="t" style="left:770.6px;top:477.3px;font-size:9.5px;line-height:14px;color:#444;letter-spacing:0.2px;">Media</div>
<div class="t" style="left:805.6px;top:477.3px;font-size:9.5px;line-height:14px;color:#444;letter-spacing:0.09px;">Font</div>
<div class="t" style="left:833px;top:477.3px;font-size:9.5px;line-height:14px;color:#444;letter-spacing:0.16px;">Doc</div>
<div class="t" style="left:858.8px;top:477.3px;font-size:9.5px;line-height:14px;color:#444;letter-spacing:-0.71px;">WS</div>
<div class="t" style="left:881.9px;top:477.3px;font-size:9.5px;line-height:14px;color:#444;letter-spacing:0.02px;">Manifest</div>
<div class="a" style="left:391px;top:494px;width:509px;height:0.8px;background:#d0d0d0;"></div>
<div class="a" style="left:399px;top:512px;width:501px;height:1px;background:#cfcfcf;"></div>
<div class="a" style="left:391px;top:559.8px;width:509px;height:0.8px;background:#cdcdcd;"></div>
<div class="a" style="left:391.3px;top:495.5px;width:1.7px;height:13.5px;background:#888;"></div>
<div class="a" style="left:460.4px;top:494.8px;width:0.8px;height:65.2px;background:#e6e6e6;"></div>
<div class="t" style="left:424.3px;top:497px;font-size:7.77px;line-height:12px;color:#333;">20000 ms</div>
<div class="a" style="left:529.3px;top:494.8px;width:0.8px;height:65.2px;background:#e6e6e6;"></div>
<div class="t" style="left:493.2px;top:497px;font-size:7.77px;line-height:12px;color:#333;">40000 ms</div>
<div class="a" style="left:598.2px;top:494.8px;width:0.8px;height:65.2px;background:#e6e6e6;"></div>
<div class="t" style="left:562.1px;top:497px;font-size:7.77px;line-height:12px;color:#333;">60000 ms</div>
<div class="a" style="left:667.1px;top:494.8px;width:0.8px;height:65.2px;background:#e6e6e6;"></div>
<div class="t" style="left:631px;top:497px;font-size:7.77px;line-height:12px;color:#333;">80000 ms</div>
<div class="a" style="left:736px;top:494.8px;width:0.8px;height:65.2px;background:#e6e6e6;"></div>
<div class="t" style="left:696.4px;top:497px;font-size:7.77px;line-height:12px;color:#333;letter-spacing:-0.09px;">100000 ms</div>
<div class="a" style="left:804.9px;top:494.8px;width:0.8px;height:65.2px;background:#e6e6e6;"></div>
<div class="t" style="left:765.3px;top:497px;font-size:7.77px;line-height:12px;color:#333;letter-spacing:-0.09px;">120000 ms</div>
<div class="a" style="left:873.8px;top:494.8px;width:0.8px;height:65.2px;background:#e6e6e6;"></div>
<div class="t" style="left:834.2px;top:497px;font-size:7.77px;line-height:12px;color:#333;letter-spacing:-0.09px;">140000 ms</div>
<div class="a" style="left:397.5px;top:511px;width:1px;height:49px;background:#f59a9a;"></div>
<div class="a" style="left:465.5px;top:511px;width:1px;height:49px;background:#f59a9a;"></div>
<div class="a" style="left:528.2px;top:511px;width:1px;height:49px;background:#f59a9a;"></div>
<div class="a" style="left:549px;top:511px;width:1px;height:49px;background:#f59a9a;"></div>
<svg class="a" style="left:391px;top:511px" width="509" height="50" viewBox="0 0 509 50"><rect x="0.300" y="3.3" width="7.200" height="1.600" fill="#0aa2ee"/><rect x="3.800" y="3.3" width="1.300" height="1.600" fill="#0cc257"/><rect x="0.300" y="5.74" width="7.200" height="1.600" fill="#0aa2ee"/><rect x="0.300" y="5.74" width="1.8" height="1.600" fill="#0cc257"/><rect x="0.300" y="8.18" width="7.200" height="1.600" fill="#0aa2ee"/><rect x="0.300" y="8.18" width="1.8" height="1.600" fill="#0cc257"/><rect x="0.300" y="10.62" width="7.200" height="1.600" fill="#0aa2ee"/><rect x="0.300" y="10.62" width="1.8" height="1.600" fill="#0cc257"/><rect x="3.800" y="10.62" width="1.300" height="1.600" fill="#0cc257"/><rect x="0.300" y="13.06" width="7.200" height="1.600" fill="#0aa2ee"/><rect x="0.300" y="13.06" width="2.6" height="1.600" fill="#0cc257"/><rect x="3.800" y="13.06" width="1.300" height="1.600" fill="#0cc257"/><rect x="0.300" y="15.5" width="7.200" height="1.600" fill="#0aa2ee"/><rect x="0.300" y="15.5" width="2.6" height="1.600" fill="#0cc257"/><rect x="3.800" y="15.5" width="1.300" height="1.600" fill="#0cc257"/><rect x="8" y="12.700" width="1.200" height="2.200" fill="#7fd8d8"/><rect x="74.2" y="18" width="2.3" height="1.2" fill="#3aa0d8"/><rect x="73.6" y="20.2" width="2.3" height="1.2" fill="#3aa0d8"/><rect x="73.6" y="22.4" width="2.3" height="1.2" fill="#3aa0d8"/><rect x="74.2" y="24.6" width="2.3" height="1.2" fill="#3aa0d8"/><rect x="73.6" y="26.8" width="2.3" height="1.2" fill="#3aa0d8"/><rect x="73.6" y="29" width="2.3" height="1.2" fill="#3aa0d8"/><rect x="136.1" y="33" width="2.3" height="1.2" fill="#3aa0d8"/><rect x="135.5" y="35.2" width="2.3" height="1.2" fill="#3aa0d8"/><rect x="135.5" y="37.4" width="2.3" height="1.2" fill="#3aa0d8"/><rect x="136.1" y="39.6" width="2.3" height="1.2" fill="#3aa0d8"/><rect x="135.5" y="41.8" width="2.3" height="1.2" fill="#3aa0d8"/><rect x="135.5" y="44" width="2.3" height="1.2" fill="#3aa0d8"/><rect x="157.1" y="6" width="2.3" height="1.2" fill="#3aa0d8"/><rect x="156.5" y="8.2" width="2.3" height="1.2" fill="#3aa0d8"/><rect x="156.5" y="10.4" width="2.3" height="1.2" fill="#3aa0d8"/><rect x="157.1" y="12.6" width="2.3" height="1.2" fill="#3aa0d8"/><rect x="156.5" y="14.8" width="2.3" height="1.2" fill="#3aa0d8"/><rect x="156.5" y="17" width="2.3" height="1.2" fill="#3aa0d8"/><rect x="157.1" y="19.2" width="2.3" height="1.2" fill="#3aa0d8"/><rect x="138.3" y="3.4" width="1.6" height="1.5" fill="#3aa0d8"/><rect x="160" y="21" width="1.5" height="1.5" fill="#3aa0d8"/><rect x="236.3" y="23.2" width="1.5" height="1.5" fill="#35b5e0"/><rect x="272.9" y="25.4" width="1.5" height="1.5" fill="#35b5e0"/><rect x="322.6" y="28" width="1.5" height="1.5" fill="#35b5e0"/><rect x="353.9" y="32.9" width="4.9" height="1.5" fill="#2fc05f"/><rect x="354" y="30.4" width="1.2" height="1.5" fill="#35b5e0"/><rect x="360.8" y="32.9" width="1.3" height="1.5" fill="#35b5e0"/><rect x="386.6" y="35.5" width="1.3" height="1.5" fill="#9fd8ee"/><rect x="395.2" y="35.5" width="1.4" height="1.5" fill="#35b5e0"/><rect x="398.4" y="35.5" width="1.4" height="1.5" fill="#35b5e0"/><rect x="401.6" y="35.5" width="1.4" height="1.5" fill="#35b5e0"/><rect x="427.9" y="38.1" width="1.3" height="1.5" fill="#35b5e0"/><rect x="432.8" y="38.1" width="1.3" height="1.5" fill="#35b5e0"/><rect x="437.7" y="38.1" width="1.3" height="1.5" fill="#35b5e0"/><rect x="440.6" y="38.1" width="1.3" height="1.5" fill="#35b5e0"/><rect x="437.7" y="40.1" width="4.9" height="1.5" fill="#2fc05f"/><rect x="446.7" y="40.1" width="1.4" height="1.5" fill="#35b5e0"/></svg>
<div class="a" style="left:391px;top:574.85px;width:509px;height:17.35px;background:#f5f5f5;"></div>
<div class="a" style="left:396px;top:578.05px;width:9.6px;height:12px;background:#fff;box-sizing:border-box;border:1px solid;border-color:#c2c2c2 #adadad #9c9c9c #b8b8b8;border-radius:1px;"></div>
<div class="t" style="left:409.7px;top:577.1px;font-size:9.5px;line-height:14px;color:#333;letter-spacing:0.15px;">index</div>
<div class="t" style="left:676.7px;top:577.1px;font-size:9.5px;line-height:14px;color:#333;">200</div>
<div class="t" style="left:761.4px;top:577.1px;font-size:9.5px;line-height:14px;color:#333;letter-spacing:-0.07px;">xhr</div>
<div class="t" style="left:845.8px;top:577.1px;font-size:9.5px;line-height:14px;color:#333;letter-spacing:-0.08px;text-decoration:underline;">appservice:3</div>
<div class="a" style="left:391px;top:592.2px;width:509px;height:17.35px;background:#fff;"></div>
<div class="a" style="left:396px;top:595.4px;width:9.6px;height:12px;background:#fff;box-sizing:border-box;border:1px solid;border-color:#c2c2c2 #adadad #9c9c9c #b8b8b8;border-radius:1px;"></div>
<div class="t" style="left:409.7px;top:594.4px;font-size:9.5px;line-height:14px;color:#333;letter-spacing:0.15px;">index</div>
<div class="t" style="left:676.7px;top:594.4px;font-size:9.5px;line-height:14px;color:#333;">200</div>
<div class="t" style="left:761.4px;top:594.4px;font-size:9.5px;line-height:14px;color:#333;letter-spacing:-0.07px;">xhr</div>
<div class="t" style="left:845.8px;top:594.4px;font-size:9.5px;line-height:14px;color:#333;letter-spacing:-0.08px;text-decoration:underline;">appservice:3</div>
<div class="a" style="left:391px;top:609.55px;width:509px;height:17.35px;background:#f5f5f5;"></div>
<div class="a" style="left:396px;top:612.75px;width:9.6px;height:12px;background:#fff;box-sizing:border-box;border:1px solid;border-color:#c2c2c2 #adadad #9c9c9c #b8b8b8;border-radius:1px;"></div>
<div class="t" style="left:409.7px;top:611.8px;font-size:9.5px;line-height:14px;color:#333;letter-spacing:0.15px;">index</div>
<div class="t" style="left:676.7px;top:611.8px;font-size:9.5px;line-height:14px;color:#333;">200</div>
<div class="t" style="left:761.4px;top:611.8px;font-size:9.5px;line-height:14px;color:#333;letter-spacing:-0.07px;">xhr</div>
<div class="t" style="left:845.8px;top:611.8px;font-size:9.5px;line-height:14px;color:#333;letter-spacing:-0.08px;text-decoration:underline;">appservice:3</div>
<div class="a" style="left:391px;top:626.9px;width:509px;height:17.35px;background:#fff;"></div>
<div class="a" style="left:396px;top:630.1px;width:9.6px;height:12px;background:#fff;box-sizing:border-box;border:1px solid;border-color:#c2c2c2 #adadad #9c9c9c #b8b8b8;border-radius:1px;"></div>
<div class="t" style="left:409.7px;top:629.1px;font-size:9.5px;line-height:14px;color:#333;letter-spacing:0.15px;">index</div>
<div class="t" style="left:676.7px;top:629.1px;font-size:9.5px;line-height:14px;color:#333;">200</div>
<div class="t" style="left:761.4px;top:629.1px;font-size:9.5px;line-height:14px;color:#333;letter-spacing:-0.07px;">xhr</div>
<div class="t" style="left:845.8px;top:629.1px;font-size:9.5px;line-height:14px;color:#333;letter-spacing:-0.08px;text-decoration:underline;">appservice:3</div>
<div class="a" style="left:391px;top:644.25px;width:509px;height:17.35px;background:#f5f5f5;"></div>
<div class="a" style="left:396px;top:647.45px;width:9.6px;height:12px;background:#fff;box-sizing:border-box;border:1px solid;border-color:#c2c2c2 #adadad #9c9c9c #b8b8b8;border-radius:1px;"></div>
<div class="t" style="left:409.7px;top:646.5px;font-size:9.5px;line-height:14px;color:#333;letter-spacing:0.21px;">add</div>
<div class="t" style="left:676.7px;top:646.5px;font-size:9.5px;line-height:14px;color:#333;">200</div>
<div class="t" style="left:761.4px;top:646.5px;font-size:9.5px;line-height:14px;color:#333;letter-spacing:-0.07px;">xhr</div>
<div class="t" style="left:845.8px;top:646.5px;font-size:9.5px;line-height:14px;color:#333;letter-spacing:-0.08px;text-decoration:underline;">appservice:3</div>
<div class="a" style="left:391px;top:661.6px;width:509px;height:17.35px;background:#fff;"></div>
<div class="a" style="left:396px;top:664.8px;width:9.6px;height:12px;background:#fff;box-sizing:border-box;border:1px solid;border-color:#c2c2c2 #adadad #9c9c9c #b8b8b8;border-radius:1px;"></div>
<div class="t" style="left:409.7px;top:663.8px;font-size:9.5px;line-height:14px;color:#333;letter-spacing:0.15px;">index</div>
<div class="t" style="left:676.7px;top:663.8px;font-size:9.5px;line-height:14px;color:#333;">200</div>
<div class="t" style="left:761.4px;top:663.8px;font-size:9.5px;line-height:14px;color:#333;letter-spacing:-0.07px;">xhr</div>
<div class="t" style="left:845.8px;top:663.8px;font-size:9.5px;line-height:14px;color:#333;letter-spacing:-0.08px;text-decoration:underline;">appservice:3</div>
<div class="a" style="left:391px;top:560.6px;width:509px;height:22.4px;background:#fff;box-shadow:0 1px 2px rgba(0,0,0,.16);border-bottom:1px solid #d6d6d6;box-sizing:border-box;"></div>
<div class="a" style="left:672.8px;top:560.6px;width:0.8px;height:116.4px;background:#dcdcdc;"></div>
<div class="a" style="left:757.2px;top:560.6px;width:0.8px;height:116.4px;background:#dcdcdc;"></div>
<div class="a" style="left:841.9px;top:560.6px;width:0.8px;height:116.4px;background:#dcdcdc;"></div>
<div class="t" style="left:395px;top:566px;font-size:9.5px;line-height:14px;color:#333;letter-spacing:-0.14px;">Name</div>
<div class="t" style="left:676.7px;top:566px;font-size:9.5px;line-height:14px;color:#333;letter-spacing:-0.11px;">Status</div>
<div class="t" style="left:761.4px;top:566px;font-size:9.5px;line-height:14px;color:#333;">Type</div>
<div class="t" style="left:845.8px;top:566px;font-size:9.5px;line-height:14px;color:#333;letter-spacing:0.26px;">Initiator</div>
</body></html>
